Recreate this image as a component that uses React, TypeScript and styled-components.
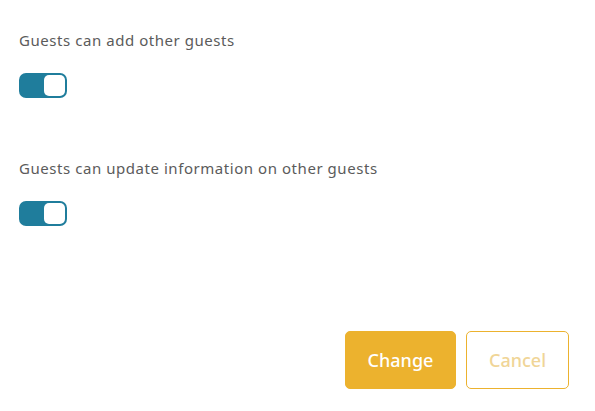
import React, { useState } from "react";
import styled, { createGlobalStyle } from "styled-components";

const Global = createGlobalStyle`
  html, body { margin: 0; padding: 0; background: #ffffff; }
  body { font-family: "Noto Sans", "Lato", sans-serif; }
`;

const Page = styled.div`
  width: 595px;
  height: 411px;
  box-sizing: border-box;
  padding: 31px 26px 0 19px;
  display: flex;
  flex-direction: column;
`;

const Setting = styled.div`
  display: flex;
  flex-direction: column;
  gap: 22px;
  margin-bottom: 61px;
`;

const Label = styled.div`
  font-size: 15px;
  line-height: 20px;
  margin-top: -1px;
  margin-bottom: 1px;
  color: #5b5b5b;
  letter-spacing: 0.55px;
`;

const Track = styled.button<{ $on: boolean }>`
  width: 48px;
  height: 25px;
  border: none;
  padding: 2px;
  border-radius: 7px;
  background: ${(p) => (p.$on ? "#1f7d9c" : "#c8c8c8")};
  display: flex;
  justify-content: ${(p) => (p.$on ? "flex-end" : "flex-start")};
  align-items: center;
  cursor: pointer;
  box-sizing: border-box;
`;

const Knob = styled.span`
  width: 21px;
  height: 21px;
  border-radius: 5px;
  background: #ffffff;
  display: block;
`;

const Actions = styled.div`
  display: flex;
  justify-content: flex-end;
  gap: 10px;
  margin-top: auto;
  margin-bottom: 22px;
`;

const Button = styled.button<{ $primary?: boolean }>`
  height: 58px;
  width: ${(p) => (p.$primary ? "111px" : "103px")};
  border-radius: 5px;
  font-family: "Noto Sans", "Lato", sans-serif;
  font-size: 18px;
  font-weight: 500;
  box-sizing: border-box;
  cursor: pointer;
  border: 1px solid #ecb22e;
  background: ${(p) => (p.$primary ? "#ecb22e" : "#ffffff")};
  color: ${(p) => (p.$primary ? "#ffffff" : "#f0d597")};
`;

function Toggle({ initial }: { initial: boolean }) {
  const [on, setOn] = useState(initial);
  return (
    <Track $on={on} onClick={() => setOn(!on)} aria-pressed={on}>
      <Knob />
    </Track>
  );
}

export default function App() {
  return (
    <>
      <Global />
      <Page>
        <Setting>
          <Label>Guests can add other guests</Label>
          <Toggle initial />
        </Setting>
        <Setting>
          <Label>Guests can update information on other guests</Label>
          <Toggle initial />
        </Setting>
        <Actions>
          <Button $primary>Change</Button>
          <Button>Cancel</Button>
        </Actions>
      </Page>
    </>
  );
}
